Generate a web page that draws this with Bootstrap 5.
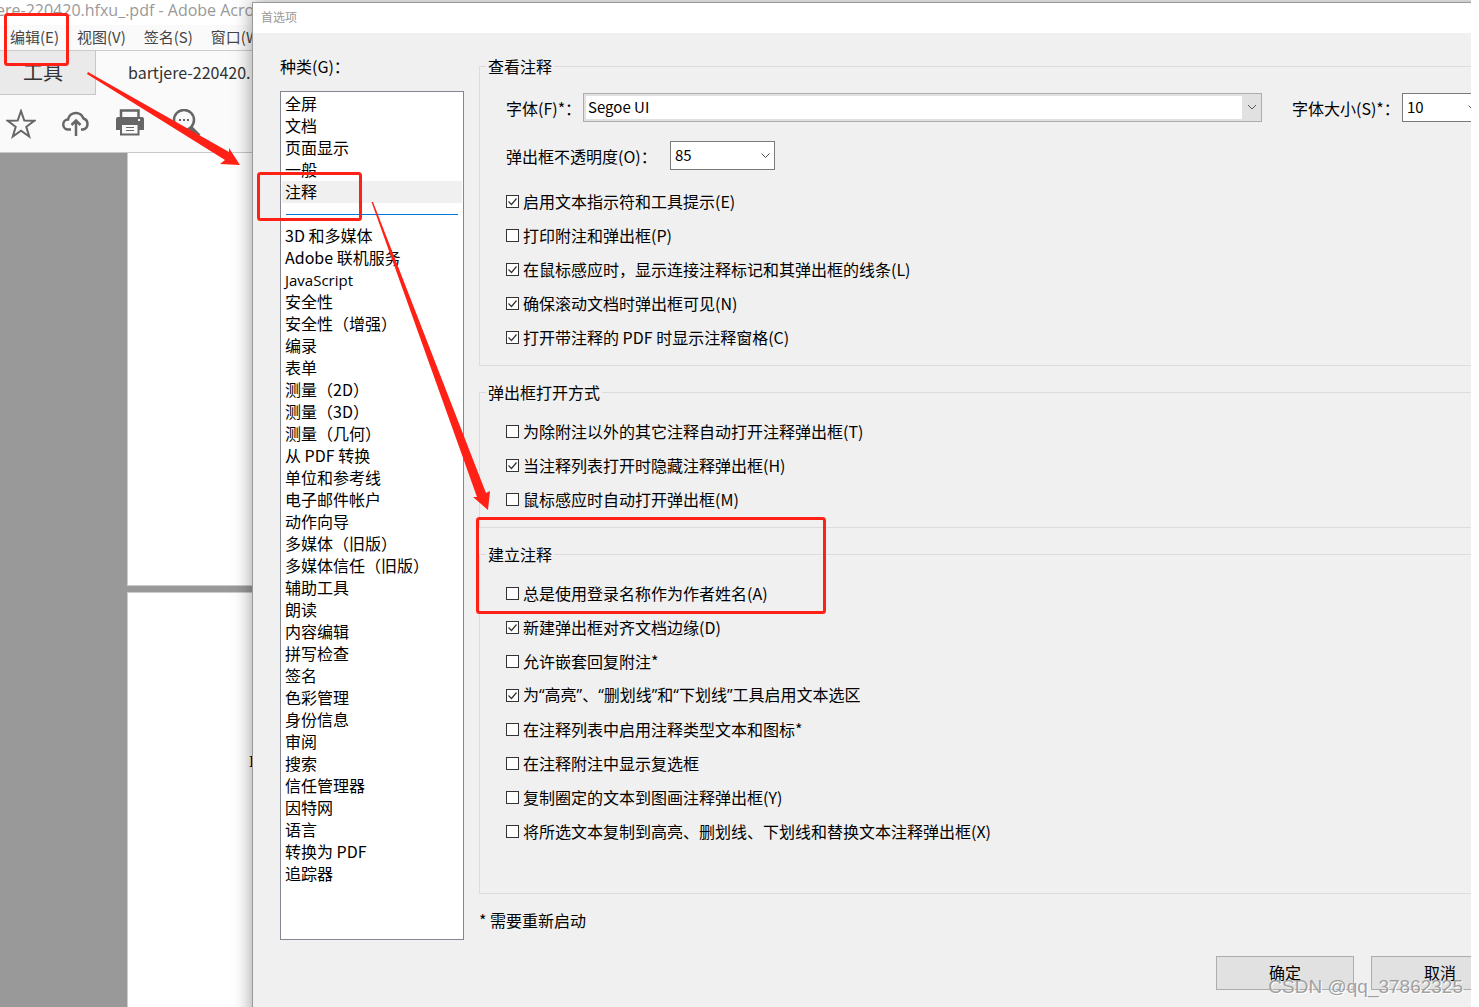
<!DOCTYPE html>
<html lang="zh-CN">
<head>
<meta charset="utf-8">
<meta name="viewport" content="width=device-width, initial-scale=1">
<title>首选项</title>
<link href="https://cdn.jsdelivr.net/npm/bootstrap@5.3.0/dist/css/bootstrap.min.css" rel="stylesheet">
<style>
body{font-family:"Noto Sans CJK SC",sans-serif;font-size:16px;line-height:22px;color:#000;background:#fff}
.desk{height:100vh;margin-right:8px;background:#fafafa}
.app-title{height:25px;line-height:20px;font-family:"Open Sans","Noto Sans CJK SC",sans-serif;color:#999;background:#fff;margin-left:-4px}
.app-menu{height:26px;gap:18px;padding:0 0 2px 10px;font-size:15px;border-bottom:1px solid #ccc}
.app-menu a{color:#444;text-decoration:none}
.app-tabs{height:44px}
.tab-tool{width:96px;background:#eaeaea;border:0;border-right:1px solid #c6c6c6;border-bottom:1px solid #c6c6c6;padding:0 0 2px 23px;text-align:left;font-size:20px;color:#333}
.tab-file{padding:0 0 2px 32px;border:0;background:none;color:#333}
.app-tools{height:58px;gap:25px;padding-left:6px;border-bottom:1px solid #c8c8c8}
.app-tools button{border:0;background:none;padding:0;width:30px;height:30px;display:block}
.app-tools svg{display:block}
.doc-area{background:#999;padding-left:127px}
.sheet-one{height:433px;background:#fff;border-left:1px solid #ccc;border-bottom:1px solid #ccc}
.sheet-two{margin-top:6px;background:#fff;border-left:1px solid #ccc;border-top:1px solid #ccc;padding:159px 0 0 121px;font-family:"Liberation Serif",serif;line-height:20px}
.dlg{left:252px;right:-56px;top:2px;bottom:-40px;background:#f0f0f0;border:1px solid #999;box-shadow:0 0 18px rgba(0,0,0,.4)}
.dlg-title{height:30px;padding-left:8px;line-height:28px;font-size:12px;color:#999;background:#fff}
.dlg-body{padding:22px 17px 0 27px;gap:15px}
.kinds{width:184px}
.kinds-label{margin-bottom:14px}
.kinds-list{height:849px;border:1px solid #828790;background:#fff;padding:1px}
.kinds-list button{display:block;width:100%;height:22px;border:0;background:none;padding:0 3px 2px;text-align:left;line-height:20px;color:#000}
.kinds-list button.active{background:#f0f0f0}
.kinds-list .en-item{font-family:"Open Sans",sans-serif;font-size:15px;padding-bottom:0}
.kinds-list hr{margin:11px 4px 10px;border-top:1px solid #0078d7;opacity:1}
.grp{border:1px solid #dcdcdc;margin-bottom:15px;padding:0 26px 11px}
.grp-last{padding-bottom:45px}
.grp legend{float:none;width:auto;margin:0 0 11px -20px;padding:0 2px;font-size:16px;line-height:22px}
.fld-row{height:29px}
.row-font{margin-top:5px}
.row-op{margin:19px 0 14px}
.lab-font{width:77px}
.lab-size{width:110px;margin-left:30px}
.lab-op{width:164px}
.combo{height:29px;border:1px solid #7a7a7a;border-radius:0;background-color:#fff;padding:0 24px 2px 4px;font-size:15px;line-height:22px;appearance:none;color:#000;background-repeat:no-repeat;background-position:right 4px center;background-image:url("data:image/svg+xml,%3Csvg xmlns='http://www.w3.org/2000/svg' width='9' height='6'%3E%3Cpath d='M.5.5l4 4 4-4' fill='none' stroke='%23555'/%3E%3C/svg%3E")}
.combo-wide{border-color:#adadad;box-shadow:inset 0 0 0 2px #e1e1e1;background-image:url("data:image/svg+xml,%3Csvg xmlns='http://www.w3.org/2000/svg' width='19' height='27'%3E%3Cpath fill='%23e1e1e1' d='M0 0h19v27H0z'/%3E%3Cpath d='M6 11l4 4 4-4' fill='none' stroke='%23555'/%3E%3C/svg%3E");background-position:right center}
.combo-size{width:80px}
.combo-op{width:105px}
.tick{height:34px;gap:4px}
.tick-quoted{font-family:"Open Sans","Noto Sans CJK SC",sans-serif}
.tick input{appearance:none;width:13px;height:13px;margin:0;border:1px solid #333;background:#fff}
.tick input:checked{background:#fff url("data:image/svg+xml,%3Csvg xmlns='http://www.w3.org/2000/svg' width='11' height='11'%3E%3Cpath d='M1.500 5.500l3 3 5-6' fill='none' stroke='%23333' stroke-width='1.200'/%3E%3C/svg%3E") no-repeat center}
.foot{margin-top:25px;gap:17px}
.push{width:138px;height:34px;border:1px solid #adadad;background:#e1e1e1;padding:0 0 2px;color:#000}
.wmark{right:8px;bottom:8px;font-family:"Liberation Sans",sans-serif;font-size:19px;line-height:24px;color:rgba(150,150,150,.9);text-shadow:1px 1px 0 #fff}
.marks{left:0;top:0;pointer-events:none}
</style>
<script src="https://cdn.jsdelivr.net/npm/bootstrap@5.3.0/dist/js/bootstrap.bundle.min.js"></script>
</head>
<body>
<div class="desk position-relative overflow-hidden d-flex flex-column">
  <div class="app-title text-nowrap">ere-220420.hfxu_.pdf - Adobe Acro</div>
  <nav class="app-menu d-flex align-items-center text-nowrap">
    <a href="#">编辑(E)</a><a href="#">视图(V)</a><a href="#">签名(S)</a><a href="#">窗口(W)</a>
  </nav>
  <div class="app-tabs d-flex">
    <button class="tab-tool" type="button">工具</button>
    <button class="tab-file" type="button">bartjere-220420.</button>
  </div>
  <div class="app-tools d-flex align-items-center">
    <button type="button" aria-label="收藏"><svg width="30" height="30" fill="none" stroke="#666" stroke-width="2"><path d="M15 2l3.300 9.500 10 .2-8 6.100 2.900 9.700-8.200-5.800-8.200 5.800 2.900-9.700-8-6.100 10-.2z"/></svg></button>
    <button type="button" aria-label="上传"><svg width="30" height="30" fill="none" stroke="#666" stroke-width="2.500"><path d="M10 20.500H7.500A5 5 0 0 1 7 10.500a8 8 0 0 1 15.500-1A5.700 5.700 0 0 1 22 20.500h-2M15 27V12M10.500 16l4.500-4.500 4.500 4.500"/></svg></button>
    <button type="button" aria-label="打印"><svg width="30" height="30"><path fill="none" stroke="#666" stroke-width="2.500" d="M5 10V1.500h17.500V10"/><path fill="#666" d="M2 8h24q2 0 2 2v11H0V10q0-2 2-2z"/><path fill="#fafafa" stroke="#666" stroke-width="2" d="M5 15h17.500v10.500H5z"/><path fill="#fafafa" d="M22 10h2v2h-2z"/><path stroke="#666" d="M10 18.500h8M10 21.500h8"/></svg></button>
    <button type="button" aria-label="查找"><svg width="30" height="30" fill="none" stroke="#666"><circle cx="13" cy="11" r="10" stroke-width="2.500"/><path stroke-width="4" d="M20 19l8 8"/><path stroke-width="2" d="M8 11h2M12 11h2M16 11h2"/></svg></button>
  </div>
  <div class="doc-area flex-grow-1 d-flex flex-column">
    <div class="sheet-one flex-shrink-0"></div>
    <div class="sheet-two flex-grow-1">I</div>
  </div>

  <section class="dlg position-absolute" role="dialog" aria-label="首选项">
    <div class="dlg-title">首选项</div>
    <div class="dlg-body d-flex">
      <div class="kinds flex-shrink-0">
        <div class="kinds-label">种类(G)：</div>
        <div class="kinds-list text-nowrap">
          <button type="button">全屏</button><button type="button">文档</button><button type="button">页面显示</button><button type="button">一般</button><button type="button" class="active">注释</button>
          <hr>
          <button type="button">3D 和多媒体</button><button type="button">Adobe 联机服务</button><button type="button" class="en-item">JavaScript</button><button type="button">安全性</button><button type="button">安全性（增强）</button><button type="button">编录</button><button type="button">表单</button><button type="button">测量（2D）</button><button type="button">测量（3D）</button><button type="button">测量（几何）</button><button type="button">从 PDF 转换</button><button type="button">单位和参考线</button><button type="button">电子邮件帐户</button><button type="button">动作向导</button><button type="button">多媒体（旧版）</button><button type="button">多媒体信任（旧版）</button><button type="button">辅助工具</button><button type="button">朗读</button><button type="button">内容编辑</button><button type="button">拼写检查</button><button type="button">签名</button><button type="button">色彩管理</button><button type="button">身份信息</button><button type="button">审阅</button><button type="button">搜索</button><button type="button">信任管理器</button><button type="button">因特网</button><button type="button">语言</button><button type="button">转换为 PDF</button><button type="button">追踪器</button>
        </div>
      </div>
      <div class="flex-grow-1 text-nowrap">
        <fieldset class="grp">
          <legend>查看注释</legend>
          <div class="fld-row row-font d-flex align-items-center">
            <label for="f1" class="lab-font">字体(F)*：</label>
            <select id="f1" class="combo combo-wide flex-grow-1"><option>Segoe UI</option></select>
            <label for="f2" class="lab-size">字体大小(S)*：</label>
            <select id="f2" class="combo combo-size"><option>10</option></select>
          </div>
          <div class="fld-row row-op d-flex align-items-center">
            <label for="f3" class="lab-op">弹出框不透明度(O)：</label>
            <select id="f3" class="combo combo-op"><option>85</option></select>
          </div>
          <label class="tick d-flex align-items-center"><input type="checkbox" checked>启用文本指示符和工具提示(E)</label>
          <label class="tick d-flex align-items-center"><input type="checkbox">打印附注和弹出框(P)</label>
          <label class="tick d-flex align-items-center"><input type="checkbox" checked>在鼠标感应时，显示连接注释标记和其弹出框的线条(L)</label>
          <label class="tick d-flex align-items-center"><input type="checkbox" checked>确保滚动文档时弹出框可见(N)</label>
          <label class="tick d-flex align-items-center"><input type="checkbox" checked>打开带注释的 PDF 时显示注释窗格(C)</label>
        </fieldset>
        <fieldset class="grp">
          <legend>弹出框打开方式</legend>
          <label class="tick d-flex align-items-center"><input type="checkbox">为除附注以外的其它注释自动打开注释弹出框(T)</label>
          <label class="tick d-flex align-items-center"><input type="checkbox" checked>当注释列表打开时隐藏注释弹出框(H)</label>
          <label class="tick d-flex align-items-center"><input type="checkbox">鼠标感应时自动打开弹出框(M)</label>
        </fieldset>
        <fieldset class="grp grp-last">
          <legend>建立注释</legend>
          <label class="tick d-flex align-items-center"><input type="checkbox">总是使用登录名称作为作者姓名(A)</label>
          <label class="tick d-flex align-items-center"><input type="checkbox" checked>新建弹出框对齐文档边缘(D)</label>
          <label class="tick d-flex align-items-center"><input type="checkbox">允许嵌套回复附注*</label>
          <label class="tick tick-quoted d-flex align-items-center"><input type="checkbox" checked>为“高亮”、“删划线”和“下划线”工具启用文本选区</label>
          <label class="tick d-flex align-items-center"><input type="checkbox">在注释列表中启用注释类型文本和图标*</label>
          <label class="tick d-flex align-items-center"><input type="checkbox">在注释附注中显示复选框</label>
          <label class="tick d-flex align-items-center"><input type="checkbox">复制圈定的文本到图画注释弹出框(Y)</label>
          <label class="tick d-flex align-items-center"><input type="checkbox">将所选文本复制到高亮、删划线、下划线和替换文本注释弹出框(X)</label>
        </fieldset>
        <div>* 需要重新启动</div>
        <div class="foot d-flex justify-content-end"><button class="push" type="button">确定</button><button class="push" type="button">取消</button></div>
      </div>
    </div>
  </section>
  <svg class="marks position-absolute w-100 h-100" fill="none" stroke="#ff2116" stroke-width="3" aria-hidden="true">
    <rect x="5.500" y="14.500" width="62" height="50" rx="2"/><rect x="258.500" y="173.500" width="102" height="46" rx="2"/><rect x="477.500" y="518.500" width="347" height="94" rx="2"/>
    <path fill="#ff2116" stroke="none" d="M88 72L229 152 229 148 240 165 220 164 225 160 87 74z"/>
    <path fill="#ff2116" stroke="none" d="M373 202L486 493 490 491 488 510 473 497 477 497 371.500 202z"/>
  </svg>
  <div class="wmark position-absolute">CSDN @qq_37862325</div>
</div>
</body>
</html>
